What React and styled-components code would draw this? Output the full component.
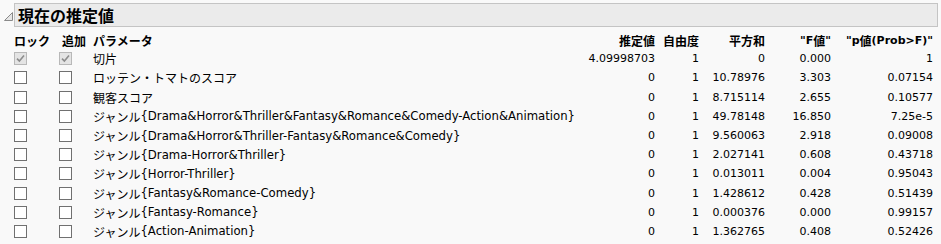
import React from "react";
import styled, { createGlobalStyle } from "styled-components";

const GlobalStyle = createGlobalStyle`
  html, body {
    margin: 0;
    padding: 0;
    background: #f9f9f9;
  }
  body {
    font-family: "DejaVu Sans", "Noto Sans CJK JP", sans-serif;
    color: #000;
  }
`;

const rows = [
  { name: "切片", est: "4.09998703", df: "1", ss: "0", f: "0.000", p: "1", locked: true },
  { name: "ロッテン・トマトのスコア", est: "0", df: "1", ss: "10.78976", f: "3.303", p: "0.07154" },
  { name: "観客スコア", est: "0", df: "1", ss: "8.715114", f: "2.655", p: "0.10577" },
  { name: "ジャンル{Drama&Horror&Thriller&Fantasy&Romance&Comedy-Action&Animation}", est: "0", df: "1", ss: "49.78148", f: "16.850", p: "7.25e-5" },
  { name: "ジャンル{Drama&Horror&Thriller-Fantasy&Romance&Comedy}", est: "0", df: "1", ss: "9.560063", f: "2.918", p: "0.09008" },
  { name: "ジャンル{Drama-Horror&Thriller}", est: "0", df: "1", ss: "2.027141", f: "0.608", p: "0.43718" },
  { name: "ジャンル{Horror-Thriller}", est: "0", df: "1", ss: "0.013011", f: "0.004", p: "0.95043" },
  { name: "ジャンル{Fantasy&Romance-Comedy}", est: "0", df: "1", ss: "1.428612", f: "0.428", p: "0.51439" },
  { name: "ジャンル{Fantasy-Romance}", est: "0", df: "1", ss: "0.000376", f: "0.000", p: "0.99157" },
  { name: "ジャンル{Action-Animation}", est: "0", df: "1", ss: "1.362765", f: "0.408", p: "0.52426" },
];

const Panel = styled.div`
  width: 941px;
  height: 244px;
  padding-top: 3px;
  box-sizing: border-box;
`;

const TitleRow = styled.div`
  display: flex;
  align-items: center;
  padding-left: 3px;
  padding-right: 3px;
`;

const Disclosure = styled.svg`
  width: 11px;
  height: 24px;
  flex: none;
`;

const TitleBox = styled.div`
  flex: 1;
  height: 24px;
  box-sizing: border-box;
  border: 1px solid #c4c4c4;
  background: #ebebeb;
  display: flex;
  align-items: center;
  padding-left: 3px;
  font-family: "Noto Sans CJK JP", sans-serif;
  font-size: 16px;
  font-weight: bold;
`;

const Table = styled.div`
  display: grid;
  grid-template-columns: 45px 34px 480px 82px 44px 66px 66px 102px;
  grid-auto-rows: 19.2px;
  padding-left: 14px;
  margin-top: 3px;
  font-size: 11px;
`;

const Head = styled.div`
  display: flex;
  align-items: center;
  height: 20.6px;
  font-weight: bold;
  white-space: nowrap;
  justify-content: ${(p) => (p.right ? "flex-end" : "flex-start")};
  padding-left: ${(p) => p.indent || 0}px;
`;

const Cell = styled.div`
  display: flex;
  align-items: center;
  white-space: pre;
  justify-content: ${(p) => (p.right ? "flex-end" : "flex-start")};
`;

const NameCell = styled(Cell)`
  font-size: 11.7px;
`;

const Jp = styled.span`
  font-family: "Noto Sans CJK JP", sans-serif;
  font-size: 12px;
`;

const Box = styled.span`
  width: 13px;
  height: 13px;
  box-sizing: border-box;
  border: 1px solid ${(p) => (p.disabled ? "#b8b8b8" : "#707070")};
  background: ${(p) => (p.disabled ? "#e4e4e4" : "#ffffff")};
  display: flex;
  align-items: center;
  justify-content: center;
`;

// 日本語部分だけ CJK フォントにする
function Mixed({ text }) {
  const parts = text.split(/([\u3000-\u9fff\uff00-\uffef]+)/);
  return parts.map((s, i) =>
    s === "" ? null : /[\u3000-\u9fff\uff00-\uffef]/.test(s) ? <Jp key={i}>{s}</Jp> : <span key={i}>{s}</span>
  );
}

function CheckBox({ disabled }) {
  return (
    <Box disabled={disabled}>
      {disabled && (
        <svg width="9" height="9" viewBox="0 0 9 9">
          <path d="M1 4.6 L3.4 7 L8 1.6" fill="none" stroke="#8c8c8c" strokeWidth="1.6" />
        </svg>
      )}
    </Box>
  );
}

export default function App() {
  return (
    <>
      <GlobalStyle />
      <Panel>
        <TitleRow>
          <Disclosure viewBox="0 0 11 24">
            <polygon points="9.5,9.5 9.5,17.5 1.5,17.5" fill="#e6e6e6" stroke="#8a8a8a" strokeWidth="1" />
          </Disclosure>
          <TitleBox>現在の推定値</TitleBox>
        </TitleRow>
        <Table>
          <Head><Mixed text="ロック" /></Head>
          <Head indent={3}><Mixed text="追加" /></Head>
          <Head><Mixed text="パラメータ" /></Head>
          <Head right><Mixed text="推定値" /></Head>
          <Head right><Mixed text="自由度" /></Head>
          <Head right><Mixed text="平方和" /></Head>
          <Head right><Mixed text={'"F値"'} /></Head>
          <Head right><Mixed text={'"p値(Prob>F)"'} /></Head>
          {rows.map((r) => (
            <React.Fragment key={r.name}>
              <Cell>
                <CheckBox disabled={r.locked} />
              </Cell>
              <Cell>
                <CheckBox disabled={r.locked} />
              </Cell>
              <NameCell><Mixed text={r.name} /></NameCell>
              <Cell right>{r.est}</Cell>
              <Cell right>{r.df}</Cell>
              <Cell right>{r.ss}</Cell>
              <Cell right>{r.f}</Cell>
              <Cell right>{r.p}</Cell>
            </React.Fragment>
          ))}
        </Table>
      </Panel>
    </>
  );
}
